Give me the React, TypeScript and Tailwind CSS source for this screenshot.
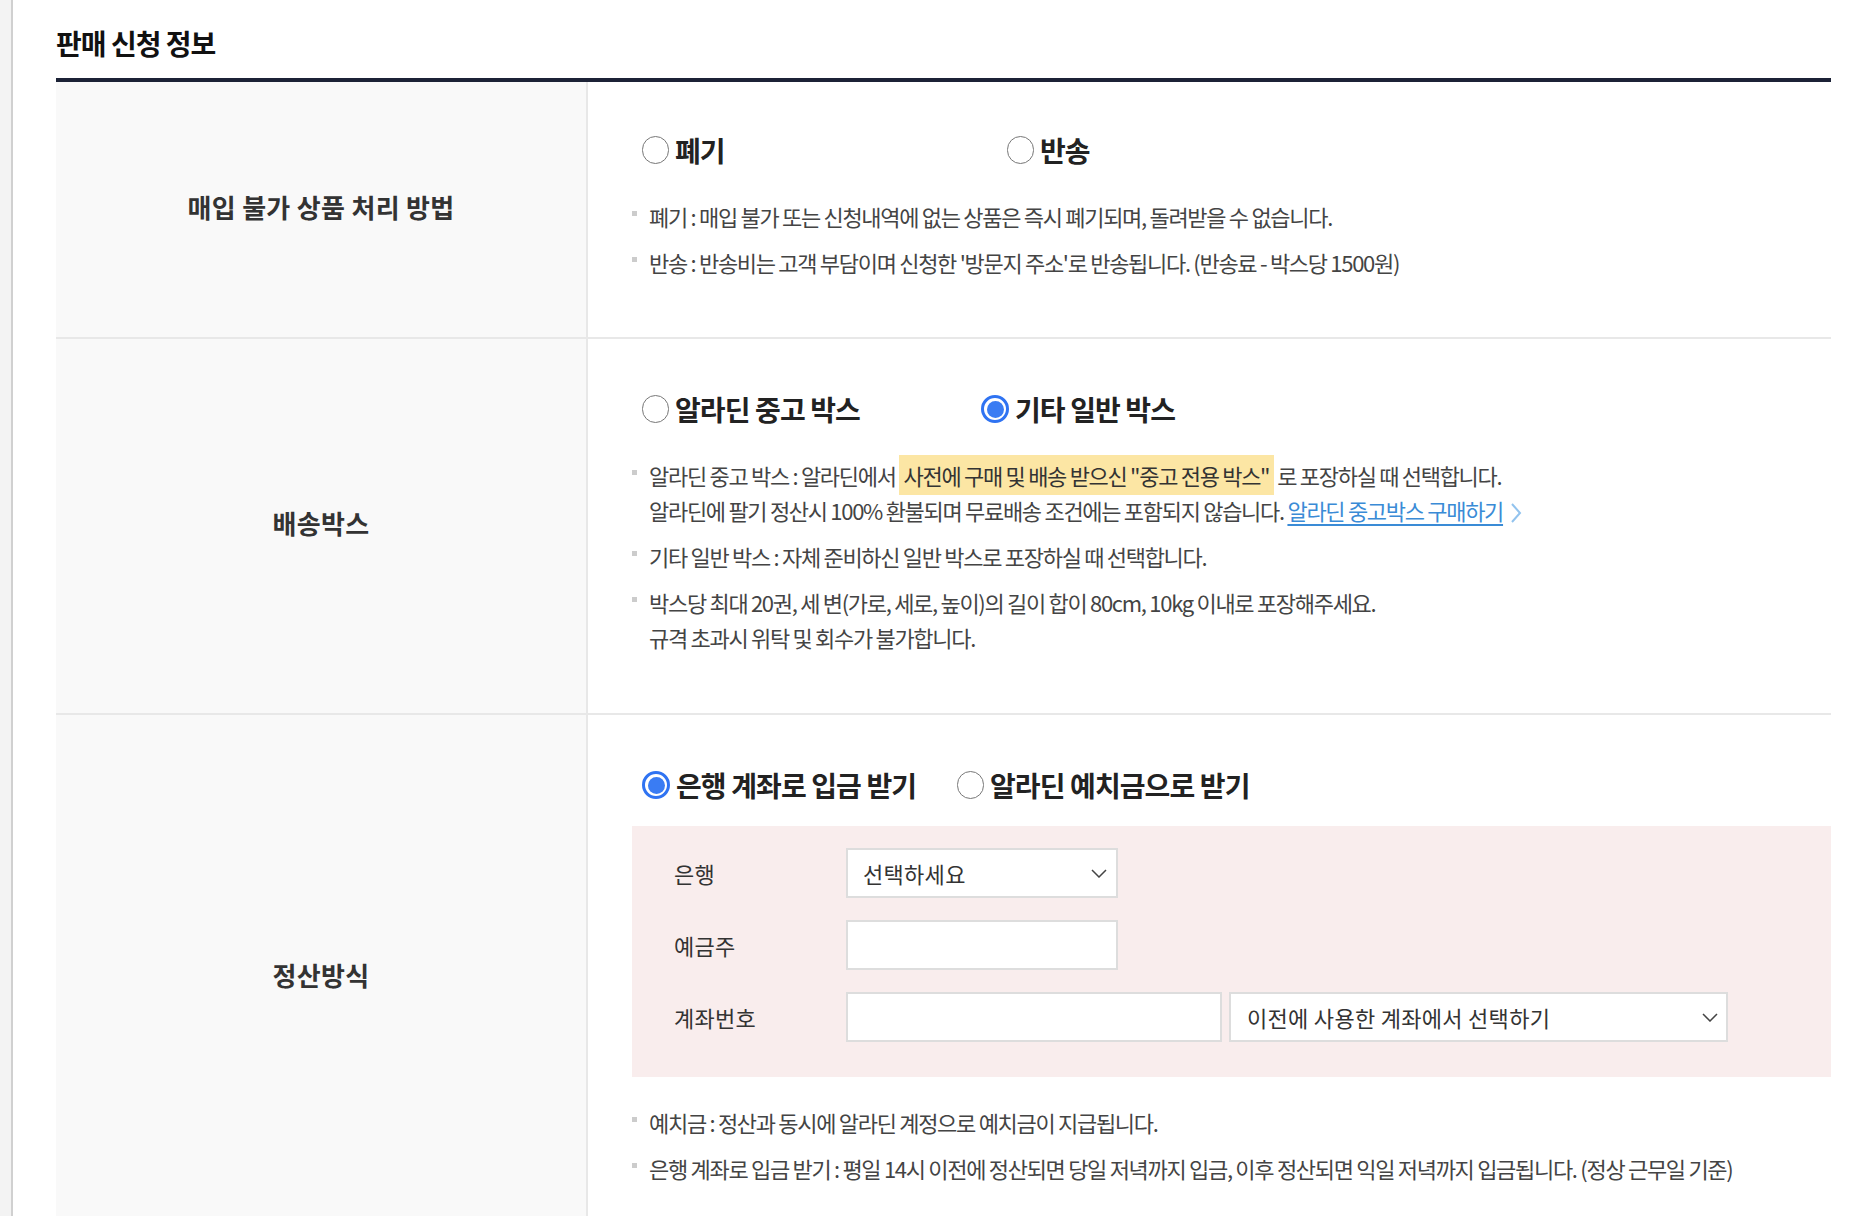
import type { ReactNode } from 'react';

function Radio({ checked }: { checked?: boolean }) {
  if (checked) {
    return (
      <span className="flex h-[28px] w-[28px] shrink-0 items-center justify-center rounded-full border-[3px] border-[#2f73f2] bg-white">
        <span className="h-[17px] w-[17px] rounded-full bg-[#3a7cf3]" />
      </span>
    );
  }
  return <span className="h-[28px] w-[27px] shrink-0 rounded-full border-[1.5px] border-[#777] bg-white" />;
}

function Option({ label, checked, width }: { label: string; checked?: boolean; width: string }) {
  return (
    <label className={`flex h-[40px] items-center gap-[6px] ${width}`}>
      <Radio checked={checked} />
      <span className="text-[28px] font-bold leading-[40px] tracking-[-0.9px] text-[#222]">{label}</span>
    </label>
  );
}

function Bullet({ children }: { children: ReactNode }) {
  return (
    <li className="flex">
      <span className="mt-[12px] h-[5px] w-[5px] shrink-0 bg-[#cccccc]" />
      <div className="ml-[12px]">{children}</div>
    </li>
  );
}

function Chevron() {
  return (
    <svg width="16" height="9" viewBox="0 0 16 9" fill="none">
      <polyline points="1,1 8,8 15,1" stroke="#444" strokeWidth="1.5" />
    </svg>
  );
}

function Row({ title, children, last }: { title: string; children: ReactNode; last?: boolean }) {
  return (
    <div className={`flex ${last ? '' : 'border-b-2 border-[#e8e8e8]'}`}>
      <div className="flex w-[532px] shrink-0 items-center justify-center border-r-2 border-[#e8e8e8] bg-[#f9f9f9] pb-[7px]">
        <span className="text-[26px] font-bold tracking-[0.3px] text-[#333]">{title}</span>
      </div>
      <div className="flex-1 pl-[44px]">{children}</div>
    </div>
  );
}

export default function App() {
  return (
    <div className="flex min-h-[1216px] w-[1864px] bg-white font-['Noto_Sans_CJK_KR','Noto_Sans',sans-serif] text-[#444]">
      <div className="w-[13px] shrink-0 border-r-2 border-[#d0d0d0] bg-[#f3f3f3]" />
      <div className="flex-1 pl-[43px] pr-[33px]">
        <h2 className="pt-[24px] text-[28px] font-bold leading-[38px] tracking-[-1px] text-[#111]">판매 신청 정보</h2>
        <div className="mt-[16px] border-t-4 border-[#1c2236]">
          {/* 매입 불가 상품 */}
          <Row title="매입 불가 상품 처리 방법">
            <div className="flex pl-[10px] pt-[48px]">
              <Option label="폐기" width="w-[365px]" />
              <Option label="반송" width="w-[300px]" />
            </div>
            <ul className="mt-[29px] space-y-[11px] pb-[57px] text-[22px] leading-[35px] tracking-[-1.3px]">
              <Bullet>폐기 : 매입 불가 또는 신청내역에 없는 상품은 즉시 폐기되며, 돌려받을 수 없습니다.</Bullet>
              <Bullet>반송 : 반송비는 고객 부담이며 신청한 '방문지 주소'로 반송됩니다. (반송료 - 박스당 1500원)</Bullet>
            </ul>
          </Row>

          {/* 배송박스 */}
          <Row title="배송박스">
            <div className="flex pl-[10px] pt-[50px]">
              <Option label="알라딘 중고 박스" width="w-[339px]" />
              <Option label="기타 일반 박스" checked width="w-[300px]" />
            </div>
            <ul className="mt-[29px] space-y-[11px] pb-[58px] text-[22px] leading-[35px] tracking-[-1.3px]">
              <Bullet>
                알라딘 중고 박스 : 알라딘에서
                <span className="mx-[3px] bg-[#fce6a4] px-[5px] py-[4px] text-[#333]">사전에 구매 및 배송 받으신 "중고 전용 박스"</span>
                로 포장하실 때 선택합니다.
                <br />
                알라딘에 팔기 정산시 100% 환불되며 무료배송 조건에는 포함되지 않습니다.{' '}
                <a className="text-[#3a8bd6] underline decoration-[1.5px] underline-offset-[4px]">알라딘 중고박스 구매하기</a>
                <svg className="ml-[7px] inline-block align-[-4px]" width="12" height="22" viewBox="0 0 12 22" fill="none">
                  <polyline points="2,2 10,11 2,20" stroke="#92c3ee" strokeWidth="2" />
                </svg>
              </Bullet>
              <Bullet>기타 일반 박스 : 자체 준비하신 일반 박스로 포장하실 때 선택합니다.</Bullet>
              <Bullet>
                박스당 최대 20권, 세 변(가로, 세로, 높이)의 길이 합이 80cm, 10kg 이내로 포장해주세요.
                <br />
                규격 초과시 위탁 및 회수가 불가합니다.
              </Bullet>
            </ul>
          </Row>

          {/* 정산방식 */}
          <Row title="정산방식" last>
            <div className="flex pl-[10px] pt-[50px]">
              <Option label="은행 계좌로 입금 받기" checked width="w-[315px]" />
              <Option label="알라딘 예치금으로 받기" width="w-[300px]" />
            </div>
            <div className="mt-[21px] flex flex-col gap-[22px] bg-[#f9eded] pb-[35px] pl-[42px] pt-[22px] text-[22px] tracking-[0.3px] text-[#333]">
              <div className="flex items-center">
                <span className="w-[172px]">은행</span>
                <div className="flex h-[50px] w-[272px] items-center justify-between border-2 border-[#dddddd] bg-white pl-[15px] pr-[9px]">
                  <span>선택하세요</span>
                  <Chevron />
                </div>
              </div>
              <div className="flex items-center">
                <span className="w-[172px]">예금주</span>
                <div className="h-[50px] w-[272px] border-2 border-[#dddddd] bg-white" />
              </div>
              <div className="flex items-center">
                <span className="w-[172px]">계좌번호</span>
                <div className="h-[50px] w-[376px] border-2 border-[#dddddd] bg-white" />
                <div className="ml-[7px] flex h-[50px] w-[499px] items-center justify-between border-2 border-[#dddddd] bg-white pl-[16px] pr-[8px]">
                  <span>이전에 사용한 계좌에서 선택하기</span>
                  <Chevron />
                </div>
              </div>
            </div>
            <ul className="mt-[28px] space-y-[11px] pb-[55px] text-[22px] leading-[35px] tracking-[-1.3px]">
              <Bullet>예치금 : 정산과 동시에 알라딘 계정으로 예치금이 지급됩니다.</Bullet>
              <Bullet>은행 계좌로 입금 받기 : 평일 14시 이전에 정산되면 당일 저녁까지 입금, 이후 정산되면 익일 저녁까지 입금됩니다. (정상 근무일 기준)</Bullet>
            </ul>
          </Row>
        </div>
      </div>
    </div>
  );
}
